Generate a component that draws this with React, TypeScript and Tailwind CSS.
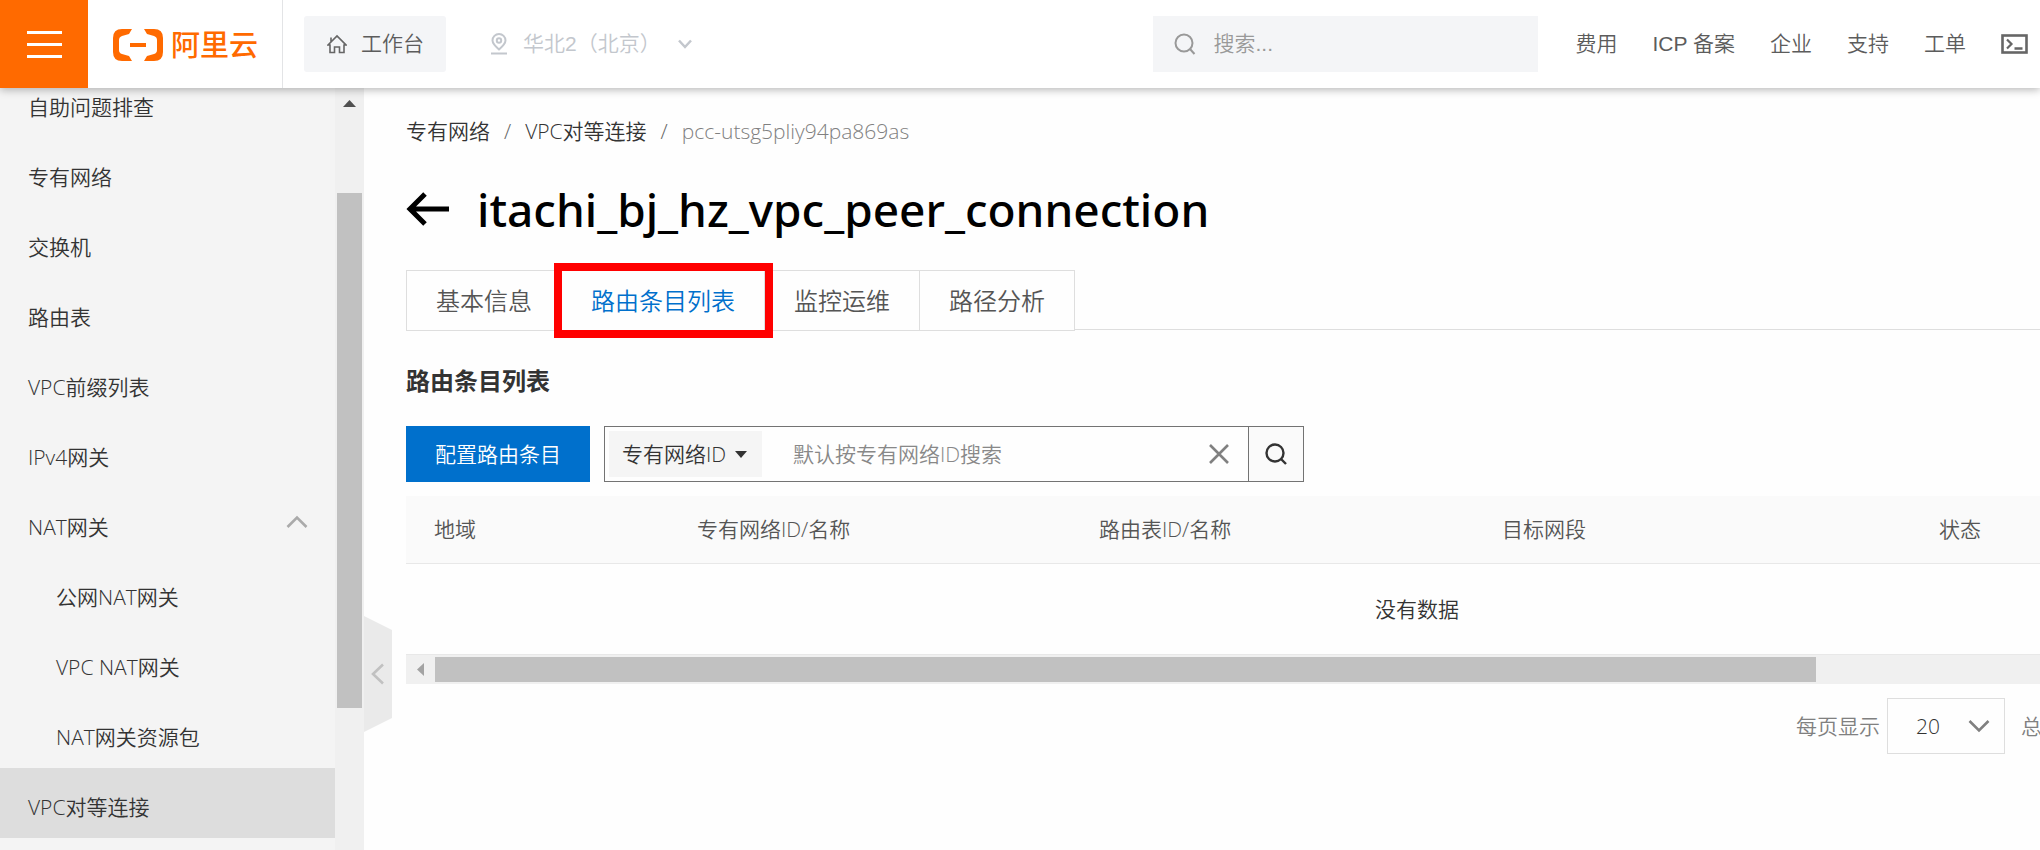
import React from "react";

const ui = "font-['Open_Sans','Noto_Sans_CJK_SC',sans-serif]";

type NavItem = { label: string; child?: boolean; open?: boolean; active?: boolean };

const sideItems: NavItem[] = [
  { label: "自助问题排查" },
  { label: "专有网络" },
  { label: "交换机" },
  { label: "路由表" },
  { label: "VPC前缀列表" },
  { label: "IPv4网关" },
  { label: "NAT网关", open: true },
  { label: "公网NAT网关", child: true },
  { label: "VPC NAT网关", child: true },
  { label: "NAT网关资源包", child: true },
  { label: "VPC对等连接", active: true },
];

const topLinks = ["费用", "ICP 备案", "企业", "支持", "工单"];

const columns = [
  { label: "地域", width: "w-[263px]" },
  { label: "专有网络ID/名称", width: "w-[402px]" },
  { label: "路由表ID/名称", width: "w-[403px]" },
  { label: "目标网段", width: "w-[437px]" },
  { label: "状态", width: "w-[517px]" },
];

function Logo() {
  return (
    <svg width="50" height="32" viewBox="0 0 50 32" fill="#ff6a00" aria-hidden="true">
      <path d="M19 0H9Q0 0 0 9V23Q0 32 9 32H19L16 27L9 25Q6 24 6 21V11Q6 8 9 7L16 5Z" />
      <path d="M31 0H41Q50 0 50 9V23Q50 32 41 32H31L34 27L41 25Q44 24 44 21V11Q44 8 41 7L34 5Z" />
      <rect x="17" y="14" width="16" height="4" />
    </svg>
  );
}

function Header() {
  return (
    <header className="relative z-10 flex h-[88px] shrink-0 items-center bg-white font-['Liberation_Sans','Noto_Sans_CJK_SC',sans-serif] text-[21px] font-[350] text-[#5c5c5c] shadow-[0_2px_8px_rgba(0,0,0,0.28)]">
      <button aria-label="菜单" className="flex h-full w-[88px] shrink-0 flex-col items-center justify-center gap-[9px] bg-[#ff6a00]">
        <span className="h-[3px] w-[35px] bg-white" />
        <span className="h-[3px] w-[35px] bg-white" />
        <span className="h-[3px] w-[35px] bg-white" />
      </button>
      <a href="#home" className="flex h-full w-[195px] shrink-0 items-center gap-2 border-r border-[#e3e4e6] pl-[25px] pt-[2px] text-[29px] font-medium leading-none text-[#ff6a00]">
        <Logo />
        <span className="pt-[2px]">阿里云</span>
      </a>
      <a href="#workbench" className="ml-[21px] flex h-14 w-[142px] shrink-0 items-center gap-[14px] rounded-[3px] bg-[#f4f5f7] pl-[23px]">
        <svg width="20" height="20" viewBox="0 0 20 20" fill="none" stroke="#666" strokeWidth="1.6" aria-hidden="true">
          <path d="M1 11L10 2L19 11H17V18.5H12.5V13H7.5V18.5H3V11H1ZM4 7.500V3.500" />
        </svg>
        工作台
      </a>
      <button className="ml-11 flex shrink-0 items-center text-[#c3c7cd]">
        <svg width="18" height="22" viewBox="0 0 18 22" fill="none" stroke="currentColor" strokeWidth="2" aria-hidden="true">
          <path d="M9 16.500C5 13 2.500 10.500 2.500 7.500A6.500 6.500 0 0 1 15.500 7.500C15.500 10.500 13 13 9 16.500Z" />
          <circle cx="9" cy="7.500" r="2.200" />
          <path d="M1 20.500H17" />
        </svg>
        <span className="ml-[15px]">华北2（北京）</span>
        <svg className="ml-[17px]" width="14" height="10" viewBox="0 0 14 10" fill="none" stroke="currentColor" strokeWidth="2.500" aria-hidden="true">
          <path d="M1 1.500L7 8L13 1.500" />
        </svg>
      </button>
      <label className="ml-auto flex h-14 w-[385px] shrink-0 items-center gap-[18px] bg-[#f4f5f7] pl-[21px]">
        <svg width="22" height="22" viewBox="0 0 22 22" fill="none" stroke="#999" strokeWidth="2" aria-hidden="true">
          <circle cx="10" cy="10" r="8.500" />
          <path d="M16 16L20.500 21" />
        </svg>
        <input aria-label="搜索" placeholder="搜索..." className="min-w-0 flex-1 bg-transparent outline-none placeholder:text-[#999]" />
      </label>
      <nav className="ml-[38px] mr-3 flex shrink-0 items-center gap-[35px]">
        {topLinks.map((t) => (
          <a key={t} href="#top">{t}</a>
        ))}
        <button aria-label="Cloud Shell">
          <svg width="27" height="20" viewBox="0 0 27 20" fill="none" stroke="#666" strokeWidth="3" aria-hidden="true">
            <rect x="1.500" y="1.500" width="24" height="17" strokeWidth="2.600" />
            <path d="M6 5.500L10.500 10L6 14.500" strokeWidth="2.200" />
            <path d="M13.500 14.500H21.500" strokeWidth="2.500" />
          </svg>
        </button>
      </nav>
    </header>
  );
}

function Sidebar() {
  return (
    <aside className="relative flex w-[364px] shrink-0 bg-[#f4f4f4]">
      <nav className="-mt-5 flex-1">
        {sideItems.map((it) => (
          <a
            key={it.label}
            href="#nav"
            className={`flex h-[70px] items-center justify-between pr-[27px] pt-[7px] text-[#333] ${it.child ? "pl-14" : "pl-7"} ${it.active ? "bg-[#ddd]" : ""}`}
          >
            {it.label}
            {it.open && (
              <svg className="mb-[10px]" width="22" height="14" viewBox="0 0 22 14" fill="none" stroke="#aaa" strokeWidth="2.600" aria-hidden="true">
                <path d="M1.500 12L11 2.500L20.500 12" />
              </svg>
            )}
          </a>
        ))}
      </nav>
      <div className="flex w-[29px] flex-col items-center bg-[#f0f0f0] pt-3">
        <svg width="13" height="7" viewBox="0 0 13 7" fill="#505050" aria-hidden="true">
          <path d="M0 7L6.500 0L13 7Z" />
        </svg>
        <div className="mt-[86px] h-[515px] w-[25px] bg-[#c1c1c1]" />
      </div>
      <button aria-label="收起" className="absolute left-full top-[528px] flex h-[116px] w-7 items-center justify-center bg-[#eaeaea] [clip-path:polygon(0_0,100%_14px,100%_102px,0_100%)]">
        <svg width="14" height="22" viewBox="0 0 14 22" fill="none" stroke="#c1c1c1" strokeWidth="2.600" aria-hidden="true">
          <path d="M12 1.500L2 11L12 20.500" />
        </svg>
      </button>
    </aside>
  );
}

function Tabs() {
  const base = "h-full border-r border-[#dedede] px-[29px]";
  return (
    <div className="mt-[33px] flex items-stretch" role="tablist">
      <div className="flex h-[61px] border-y border-l border-[#dedede] text-2xl text-[#555]">
        <button role="tab" className={base}>基本信息</button>
        <div className="relative">
          <button role="tab" aria-selected="true" className={`${base} text-[#0070cc]`}>路由条目列表</button>
          <span className="pointer-events-none absolute -inset-x-2 -inset-y-2 border-8 border-[#f00]" />
        </div>
        <button role="tab" className={base}>监控运维</button>
        <button role="tab" className={base}>路径分析</button>
      </div>
      <div className="mb-px flex-1 border-b border-[#dedede]" />
    </div>
  );
}

function SearchBar() {
  return (
    <div className="mt-[29px] flex h-14 gap-[14px]">
      <button className="w-[184px] bg-[#0070cc] text-white">配置路由条目</button>
      <div className="flex w-[700px] items-center border border-[#737373] pl-1">
        <button className="flex h-[46px] w-[153px] items-center gap-[9px] bg-[#f5f5f5] pl-[13px] text-[#333]">
          专有网络ID
          <svg width="12" height="7" viewBox="0 0 12 7" fill="#333" aria-hidden="true">
            <path d="M0 0H12L6 7Z" />
          </svg>
        </button>
        <input
          aria-label="专有网络ID"
          placeholder="默认按专有网络ID搜索"
          className="ml-[31px] min-w-0 flex-1 outline-none placeholder:text-[#888]"
        />
        <button aria-label="清除" className="mr-[19px]">
          <svg width="20" height="20" viewBox="0 0 20 20" fill="none" stroke="#808080" strokeWidth="2.600" aria-hidden="true">
            <path d="M1 1L19 19M19 1L1 19" />
          </svg>
        </button>
        <button aria-label="搜索" className="flex h-full w-[55px] items-center justify-center border-l border-[#737373] bg-[#fafafa]">
          <svg width="22" height="22" viewBox="0 0 22 22" fill="none" stroke="#333" strokeWidth="2.400" aria-hidden="true">
            <circle cx="10" cy="10" r="8.500" />
            <path d="M16 16L21 21" />
          </svg>
        </button>
      </div>
    </div>
  );
}

export default function App() {
  return (
    <div className={`flex h-screen flex-col overflow-hidden bg-[#fefefe] text-[21px] font-[350] leading-7 text-[#333] ${ui}`}>
      <Header />
      <div className="flex min-h-0 flex-1">
        <Sidebar />
        <main className="min-w-0 flex-1 overflow-hidden pl-[42px] pt-[29px]">
          <nav className="flex gap-[14px]">
            <a href="#vpc">专有网络</a>
            <span className="text-[#666]">/</span>
            <a href="#peer">VPC对等连接</a>
            <span className="text-[#666]">/</span>
            <span className="text-[#808080]">pcc-utsg5pliy94pa869as</span>
          </nav>
          <div className="mt-9 flex h-14 items-center gap-7 text-black">
            <button aria-label="返回">
              <svg width="43" height="34" viewBox="0 0 43 34" fill="none" stroke="currentColor" strokeWidth="5" aria-hidden="true">
                <path d="M19 2L4 17L19 32M3 17H43" />
              </svg>
            </button>
            <h1 className="font-['Noto_Sans',sans-serif] text-[46px] font-medium leading-none">itachi_bj_hz_vpc_peer_connection</h1>
          </div>
          <Tabs />
          <h2 className="mt-[34px] text-2xl font-bold leading-[32px]">路由条目列表</h2>
          <SearchBar />
          <div className="mt-[14px] overflow-hidden">
            <table className="w-full min-w-[2022px] table-fixed border-collapse">
              <thead>
                <tr className="h-[67px] border-b border-[#e8e8e8] bg-[#fafafa] text-left text-[#555]">
                  {columns.map((c) => (
                    <th key={c.label} className={`${c.width} pl-7 font-[350]`}>{c.label}</th>
                  ))}
                </tr>
              </thead>
              <tbody>
                <tr className="h-[91px] border-b border-[#e8e8e8]">
                  <td colSpan={5} className="text-center">没有数据</td>
                </tr>
              </tbody>
            </table>
            <div className="flex h-[29px] items-center bg-[#f0f0f0] pl-[11px]">
              <svg width="7" height="13" viewBox="0 0 7 13" fill="#a3a3a3" aria-hidden="true">
                <path d="M7 0V13L0 6.500Z" />
              </svg>
              <div className="ml-[11px] mr-56 h-[25px] flex-1 bg-[#c1c1c1]" />
            </div>
          </div>
          <div className="-mr-[2px] mt-[14px] flex items-center justify-end text-[#808080]">
            <label htmlFor="size" className="mr-[7px]">每页显示</label>
            <div className="relative mr-4 flex items-center">
              <select id="size" className="h-14 w-[118px] appearance-none border border-[#dedede] bg-transparent pl-7 text-[#333] outline-none">
                <option>20</option>
              </select>
              <svg className="pointer-events-none absolute right-[15px]" width="22" height="14" viewBox="0 0 22 14" fill="none" stroke="#808080" strokeWidth="2.600" aria-hidden="true">
                <path d="M1.500 2L11 11.500L20.500 2" />
              </svg>
            </div>
            <span>总</span>
          </div>
        </main>
      </div>
    </div>
  );
}
